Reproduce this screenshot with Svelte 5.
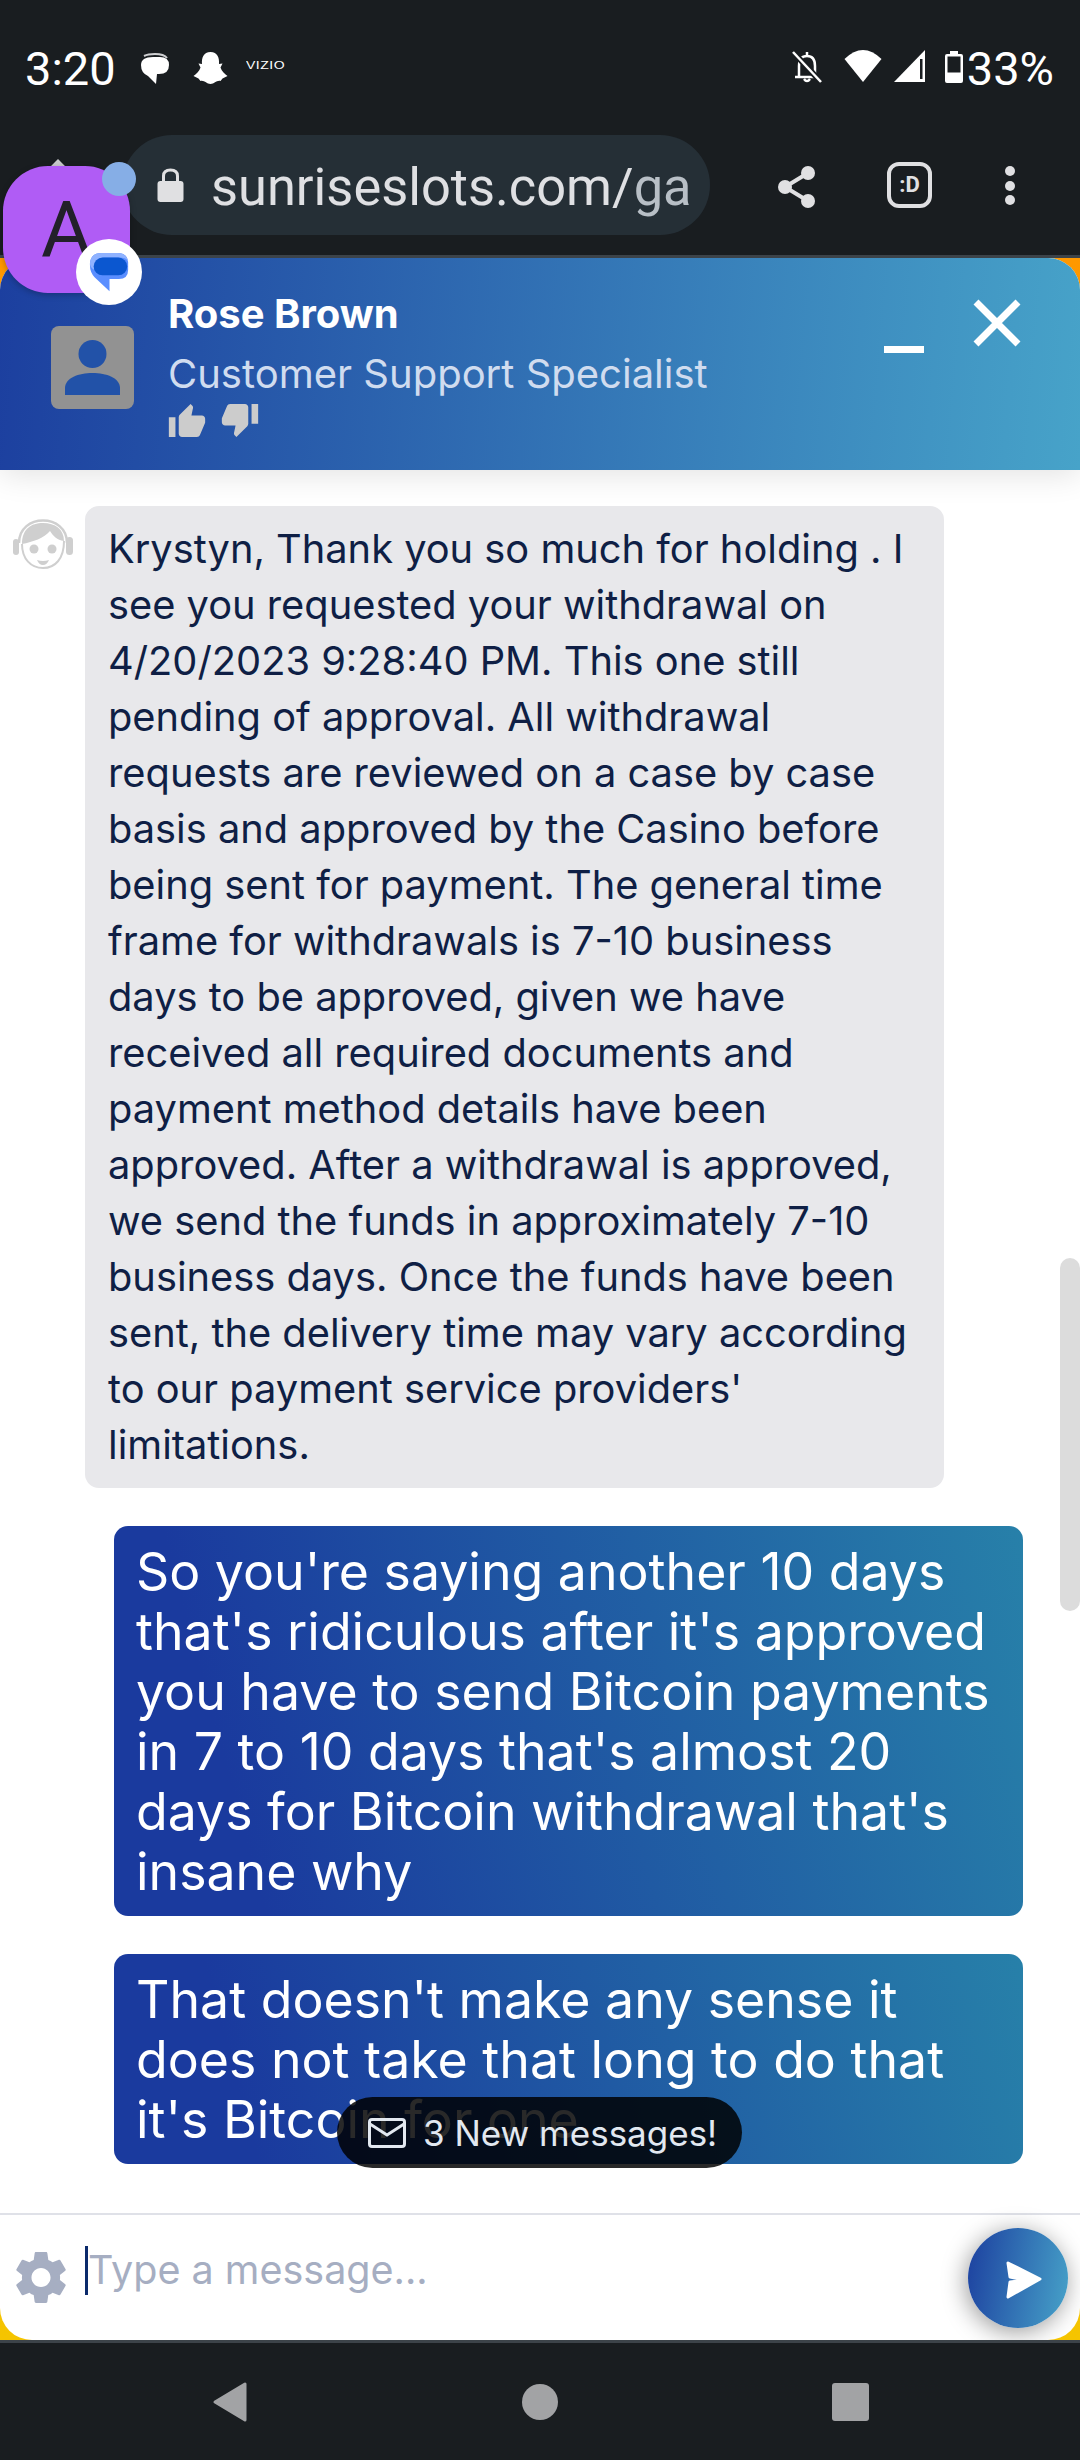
<script>
	const messages = [
		"So you're saying another 10 days that's ridiculous after it's approved you have to send Bitcoin payments in 7 to 10 days that's almost 20 days for Bitcoin withdrawal that's insane why",
		"That doesn't make any sense it does not take that long to do that it's Bitcoin for one"
	];
	const agentMessage = "Krystyn, Thank you so much for holding . I see you requested your withdrawal on 4/20/2023 9:28:40 PM. This one still pending of approval. All withdrawal requests are reviewed on a case by case basis and approved by the Casino before being sent for payment. The general time frame for withdrawals is 7-10 business days to be approved, given we have received all required documents and payment method details have been approved. After a withdrawal is approved, we send the funds in approximately 7-10 business days. Once the funds have been sent, the delivery time may vary according to our payment service providers' limitations.";
</script>

<div class="phone">
	<div class="statusbar">
		<span class="clock">3:20</span>
		<svg class="ic-chat" width="30" height="31" viewBox="0 0 30 31">
			<path d="M4 3 Q8 1 15 1 Q24 1 27 5" fill="none" stroke="#cfd0d2" stroke-width="2"/>
			<path d="M1 12 Q1 4 13 4 H20 Q29 4 29 12 Q29 21 19 21 H17 L16 31 L8 23 Q1 20 1 12Z" fill="#fff"/>
		</svg>
		<svg class="ic-snap" width="35" height="34" viewBox="0 0 34 34">
			<path d="M17 1 C24 1 26 7 25.500 13 L29 12.500 L27 16.500 C28 20 31 23 34 25 L29 27.500 L27 30 C23 29 21 33 17 33 C13 33 11 29 7 30 L5 27.500 L0 25 C3 23 6 20 7 16.500 L5 12.500 L8.500 13 C8 7 10 1 17 1Z" fill="#fff"/>
		</svg>
		<span class="vizio">VIZIO</span>
		<span class="spacer"></span>
		<svg class="ic-bell" width="30" height="32" viewBox="0 0 30 32">
			<path d="M15 1 V4 M7 25 V15 Q7 5 15 5 Q23 5 23 15 V25 M3 26 H26 M12 28 Q15 32 18 28" fill="none" stroke="#fff" stroke-width="2.500"/>
			<path d="M1 1 L29 31" stroke="#191d20" stroke-width="6"/>
			<path d="M1 1 L29 31" stroke="#fff" stroke-width="2.500"/>
		</svg>
		<svg class="ic-wifi" width="38" height="32" viewBox="0 0 37 32">
			<path d="M0 9 Q18.500 -9 37 9 L18.500 32Z" fill="#fff"/>
		</svg>
		<svg class="ic-cell" width="31" height="33" viewBox="0 0 31 33">
			<path d="M0 32 L31 0 V32Z" fill="#fff"/>
			<rect x="26" y="9" width="2.500" height="20" fill="#191d20"/>
		</svg>
		<svg class="ic-batt" width="18" height="32" viewBox="0 0 18 32">
			<path d="M5 0 H13 V3 H16 Q18 3 18 5 V30 Q18 32 16 32 H2 Q0 32 0 30 V5 Q0 3 2 3 H5Z" fill="#fff"/>
			<rect x="2.500" y="5.500" width="13" height="16" fill="#191d20"/>
		</svg>
		<span class="pct">33%</span>
	</div>

	<div class="toolbar">
		<div class="urlbar">
			<svg width="27" height="34" viewBox="0 0 26 34">
				<path d="M6 14 V8 Q6 2 13 2 Q20 2 20 8 V14" fill="none" stroke="#e0e0e2" stroke-width="3"/>
				<rect y="13" width="26" height="21" rx="3" fill="#e0e0e2"/>
			</svg>
			<span class="url">sunriseslots.com/<span class="fade">ga</span></span>
		</div>
		<svg class="ic-share" width="38" height="44" viewBox="0 0 38 44">
			<path d="M30 8 L7 22 L30 36" fill="none" stroke="#e0e0e2" stroke-width="4"/>
			<circle cx="30" cy="8" r="7" fill="#e0e0e2"/>
			<circle cx="7" cy="22" r="7" fill="#e0e0e2"/>
			<circle cx="30" cy="36" r="7" fill="#e0e0e2"/>
		</svg>
		<div class="tabs">:D</div>
		<div class="dots"><i></i><i></i><i></i></div>
	</div>

	<div class="widget">
		<div class="panel">
			<header class="chathead">
				<div class="agent-pic">
					<svg width="83" height="83" viewBox="0 0 83 83">
						<rect width="83" height="83" rx="8" fill="#929292"/>
						<circle cx="41.500" cy="28" r="14" fill="#2252a8"/>
						<path d="M14 69 V62 C14 42 69 42 69 62 V69Z" fill="#2252a8"/>
					</svg>
				</div>
				<div class="agent-info">
					<div class="agent-name">Rose Brown</div>
					<div class="agent-role">Customer Support Specialist</div>
					<div class="rating">
						<svg width="38" height="33" viewBox="1 1 22 20"><path d="M1 21h4V9H1v12zm22-11c0-1.100-.9-2-2-2h-6.310l.95-4.570.03-.32c0-.41-.17-.79-.44-1.060L14.170 1 7.590 7.590C7.220 7.950 7 8.450 7 9v10c0 1.100.9 2 2 2h9c.83 0 1.540-.5 1.840-1.220l3.020-7.050c.09-.23.14-.47.14-.73v-2z" fill="#ccc"/></svg>
						<svg width="38" height="33" viewBox="1 3 22 20"><path d="M15 3H6c-.83 0-1.540.5-1.840 1.220l-3.020 7.050c-.09.23-.14.47-.14.73v2c0 1.100.9 2 2 2h6.310l-.95 4.570-.03.32c0 .41.17.79.44 1.060L9.830 23l6.590-6.590c.36-.36.58-.86.58-1.410V5c0-1.100-.9-2-2-2zm4 0v12h4V3h-4z" fill="#ccc"/></svg>
					</div>
				</div>
				<div class="minimize"></div>
				<svg class="close" width="48" height="48" viewBox="0 0 48 48">
					<path d="M3 3 L45 45 M45 3 L3 45" stroke="#fff" stroke-width="7"/>
				</svg>
			</header>

			<div class="chat">
				<div class="row">
					<svg class="bot" width="60" height="54" viewBox="0 0 60 54">
						<path d="M6 24 C6 -6 54 -6 54 24" fill="none" stroke="#cfcfcf" stroke-width="2.500"/>
						<path d="M9 25 C9 10 18 4 30 4 C42 4 51 10 51 22 C44 21 40 17 37 12 C31 19 20 23 9 25Z" fill="#cfcfcf"/>
						<path d="M9 25 C9 40 18 49 30 49 C42 49 51 40 51 22" fill="none" stroke="#cfcfcf" stroke-width="2"/>
						<rect x="0" y="20" width="6" height="16" rx="3" fill="#cfcfcf"/>
						<rect x="53" y="18" width="7" height="18" rx="3.500" fill="#cfcfcf"/>
						<circle cx="21" cy="30" r="4.500" fill="#cfcfcf"/>
						<circle cx="39" cy="30" r="4.500" fill="#cfcfcf"/>
						<path d="M24 41 Q30 43 36 41 Q34 46 30 46 Q26 46 24 41Z" fill="#cfcfcf"/>
					</svg>
					<div class="bubble agent">{agentMessage}</div>
				</div>
				{#each messages as text}
					<div class="bubble mine">{text}</div>
				{/each}

				<div class="newmsgs">
					<svg width="38" height="30" viewBox="0 0 38 30">
						<rect x="1.500" y="1.500" width="35" height="27" rx="2.500" fill="none" stroke="#e2e8f0" stroke-width="3"/>
						<path d="M2 6 L19 17 L36 6" fill="none" stroke="#e2e8f0" stroke-width="3"/>
					</svg>
					<span>3 New messages!</span>
				</div>
				<div class="scrollbar"></div>
			</div>

			<footer class="composer">
				<svg class="gear" width="52" height="53" viewBox="2.500 2 19 20">
					<path d="M19.140 12.940c.04-.3.06-.61.06-.94 0-.32-.02-.64-.07-.94l2.030-1.580c.18-.14.23-.41.12-.61l-1.920-3.320c-.12-.22-.37-.29-.59-.22l-2.390.96c-.5-.38-1.030-.7-1.620-.94l-.36-2.540c-.04-.24-.24-.41-.48-.41h-3.840c-.24 0-.43.17-.47.41l-.36 2.540c-.59.24-1.130.57-1.620.94l-2.390-.96c-.22-.08-.47 0-.59.22L2.740 8.870c-.12.21-.08.47.12.61l2.030 1.580c-.05.3-.09.63-.09.94s.02.64.07.94l-2.030 1.580c-.18.14-.23.41-.12.61l1.920 3.320c.12.22.37.29.59.22l2.390-.96c.5.38 1.030.7 1.620.94l.36 2.540c.05.24.24.41.48.41h3.840c.24 0 .44-.17.47-.41l.36-2.540c.59-.24 1.130-.56 1.620-.94l2.390.96c.22.08.47 0 .59-.22l1.920-3.320c.12-.22.07-.47-.12-.61l-2.010-1.580zM12 15.600c-1.980 0-3.600-1.620-3.600-3.600s1.620-3.600 3.600-3.600 3.600 1.620 3.600 3.600-1.620 3.600-3.600 3.600z" fill="#a6aec2"/>
				</svg>
				<div class="caret"></div>
				<div class="placeholder">Type a message...</div>
				<div class="send">
					<svg width="38" height="40" viewBox="0 0 38 40">
						<path d="M3 3 L35 19 L3 37 L5 22 L20 20 L5 17Z" fill="#fff" stroke="#fff" stroke-width="3" stroke-linejoin="round"/>
					</svg>
				</div>
			</footer>
		</div>
	</div>

	<nav class="navbar">
		<svg width="36" height="42" viewBox="0 0 36 42"><path d="M33 3 V39 L3 21Z" fill="#a2a3a5" stroke="#a2a3a5" stroke-width="3" stroke-linejoin="round"/></svg>
		<div class="home"></div>
		<div class="recents"></div>
	</nav>

	<div class="launcher">
		<i class="peek"></i>
		<div class="tile"><span>A</span></div>
		<i class="dot"></i>
		<div class="badge">
			<svg width="41" height="41" viewBox="0 0 42 44">
				<path d="M12 1 H30 Q40 1 41 11 V19 Q41 29 31 29 H21 V42 L5 27 Q0 22 0 14 V12 Q1 1 12 1Z" fill="#5a8eff"/>
				<path d="M12 1 H30 Q38 1 41 9 Q38 6 33 6 H15 Q6 6 4 19 Q0 16 0 12 Q1 1 12 1Z" fill="#8fb2ff"/>
				<rect x="4" y="6" width="36" height="19" rx="9.500" fill="#0b57d0"/>
			</svg>
		</div>
	</div>
</div>

<style>
	:global(body) {
		margin: 0;
		background: #191d20;
	}

	.phone {
		position: relative;
		width: 1080px;
		height: 2460px;
		display: flex;
		flex-direction: column;
		overflow: hidden;
		font-family: Inter, "Liberation Sans", sans-serif;
	}

	.statusbar {
		height: 128px;
		box-sizing: border-box;
		padding: 45px 26px 0 25px;
		display: flex;
		align-items: flex-start;
		color: #fff;
		font-family: Roboto, sans-serif;
		font-size: 47px;
		line-height: 48px;
	}
	.clock { width: 115px; }
	.ic-chat { margin: 8px 0 0 0; }
	.ic-snap { margin: 6px 0 0 23px; }
	.vizio {
		margin: 12px 0 0 18px;
		font-family: "Liberation Sans", sans-serif;
		font-size: 14px;
		line-height: 16px;
		letter-spacing: 0.5px;
		transform: scaleY(.8);
	}
	.spacer { flex: 1; }
	.ic-bell { margin-top: 6px; }
	.ic-wifi { margin: 5px 0 0 22px; }
	.ic-cell { margin: 5px 0 0 12px; }
	.ic-batt { margin: 6px 0 0 20px; }
	.pct { margin-left: 4px; }

	.toolbar {
		height: 130px;
		box-sizing: border-box;
		border-bottom: 3px solid #3c4349;
		padding: 7px 0 0 122px;
		display: flex;
		align-items: flex-start;
	}
	.urlbar {
		width: 588px;
		height: 100px;
		box-sizing: border-box;
		border-radius: 50px;
		background: #252f36;
		padding-left: 35px;
		display: flex;
		align-items: center;
		gap: 27px;
		overflow: hidden;
	}
	.url {
		font-family: Roboto, sans-serif;
		font-size: 52.400px;
		padding-top: 3px;
		color: #dfe0e3;
		white-space: nowrap;
	}
	.fade { color: #b8bfc6; }
	.ic-share { margin: 30px 0 0 68px; }
	.tabs {
		margin: 27px 0 0 71px;
		width: 45px;
		height: 46px;
		box-sizing: border-box;
		border: 4px solid #e0e0e2;
		border-radius: 12px;
		color: #e0e0e2;
		font-family: Roboto, sans-serif;
		font-weight: 700;
		font-size: 22px;
		line-height: 37px;
		text-align: center;
	}
	.dots {
		margin: 31px 0 0 73px;
		display: flex;
		flex-direction: column;
		gap: 4.500px;
	}
	.dots i {
		width: 10px;
		height: 10px;
		border-radius: 50%;
		background: #e0e0e2;
	}

	.widget {
		height: 2082px;
		background: linear-gradient(#ff9800, #f5c400);
	}
	.panel {
		height: 100%;
		border-radius: 32px;
		overflow: hidden;
		background: #fff;
		display: flex;
		flex-direction: column;
	}

	.chathead {
		position: relative;
		height: 212px;
		flex: none;
		box-sizing: border-box;
		padding: 68px 0 0 51px;
		display: flex;
		align-items: flex-start;
		color: #fff;
		background: linear-gradient(95deg, #1c3f9f, #47a3c9);
		box-shadow: 0 4px 30px rgba(0, 0, 0, .12);
	}
	.agent-info {
		margin: -37px 0 0 34px;
		flex: 1;
	}
	.agent-name {
		font-weight: 700;
		font-size: 40px;
		line-height: 50px;
	}
	.agent-role {
		margin-top: 10px;
		font-size: 40px;
		line-height: 50px;
		color: #d0dcef;
	}
	.rating {
		display: flex;
		gap: 15px;
		margin-top: 5px;
	}
	.minimize {
		width: 40px;
		height: 7px;
		margin: 20px 49px 0 0;
		background: #fff;
	}
	.close { margin: -27px 59px 0 0; }

	.chat {
		position: relative;
		flex: 1;
		box-sizing: border-box;
		padding-top: 36px;
		overflow: hidden;
		display: flex;
		flex-direction: column;
		align-items: flex-end;
		gap: 38px;
	}
	.row {
		align-self: flex-start;
		display: flex;
		align-items: flex-start;
		gap: 12px;
		padding: 0 0 0 13px;
	}
	.bubble {
		box-sizing: border-box;
		padding: 15px 23px;
		border-radius: 14px;
		flex: none;
	}
	.agent {
		width: 859px;
		background: #e8e8eb;
		color: #0f1f45;
		font-size: 39.800px;
		line-height: 56px;
	}
	.bot { margin-top: 13px; flex: none; }
	.mine {
		width: 909px;
		margin-right: 57px;
		padding-left: 22px;
		color: #fff;
		font-size: 51.800px;
		line-height: 60px;
		background: linear-gradient(75deg, #1a3a9e 15%, #2780a9 100%);
	}
	.newmsgs {
		position: absolute;
		left: 337px;
		bottom: 45px;
		height: 71px;
		width: 405px;
		box-sizing: border-box;
		padding-left: 31px;
		border-radius: 36px;
		background: rgba(0, 0, 0, .84);
		display: flex;
		align-items: center;
		gap: 17px;
		color: #e2e8f0;
		font-size: 35px;
	}
	.scrollbar {
		position: absolute;
		right: 0;
		top: 788px;
		width: 20px;
		height: 353px;
		border-radius: 10px;
		background: #dcdcdc;
	}

	.composer {
		position: relative;
		height: 127px;
		flex: none;
		box-sizing: border-box;
		border-top: 2px solid #dfe1e8;
		display: flex;
		align-items: flex-start;
	}
	.gear { margin: 36px 0 0 15px; }
	.caret {
		width: 3px;
		height: 49px;
		margin: 31px 0 0 18px;
		background: #0b2a6b;
	}
	.placeholder {
		margin: 31px 0 0 0;
		font-size: 39.500px;
		line-height: 49px;
		color: #a6aec2;
		flex: 1;
	}
	.send {
		width: 100px;
		height: 100px;
		margin: 13px 12px 0 0;
		padding: 4px 0 0 12px;
		box-sizing: border-box;
		border-radius: 50%;
		background: linear-gradient(100deg, #1c3f9f, #47a3c9);
		box-shadow: -2px 4px 24px rgba(0, 0, 0, .4);
		display: flex;
		align-items: center;
		justify-content: center;
	}

	.navbar {
		flex: 1;
		border-top: 3px solid #3c4349;
		display: flex;
		align-items: center;
		justify-content: center;
		gap: 274px;
	}
	.home {
		width: 36px;
		height: 36px;
		border-radius: 50%;
		background: #a2a3a5;
	}
	.recents {
		width: 37px;
		height: 38px;
		border-radius: 3px;
		background: #a2a3a5;
	}

	.launcher {
		position: absolute;
		left: 3px;
		top: 166px;
		width: 127px;
		height: 127px;
	}
	.peek {
		position: absolute;
		left: 48px;
		top: -4px;
		width: 14px;
		height: 14px;
		background: #c8c9cb;
		transform: rotate(45deg);
	}
	.tile {
		position: relative;
		height: 127px;
		border-radius: 45px;
		background: #b05cf5;
		color: #22202a;
		font-family: Roboto, sans-serif;
		font-size: 78px;
		line-height: 130px;
		text-align: center;
		box-shadow: 0 2px 6px rgba(0, 0, 0, .25);
	}
	.dot {
		position: absolute;
		left: 99px;
		top: -4px;
		width: 34px;
		height: 34px;
		border-radius: 50%;
		background: #86aee6;
	}
	.badge {
		position: absolute;
		left: 73px;
		top: 73px;
		width: 66px;
		height: 66px;
		border-radius: 50%;
		background: #fff;
		display: flex;
		align-items: center;
		justify-content: center;
	}
</style>
